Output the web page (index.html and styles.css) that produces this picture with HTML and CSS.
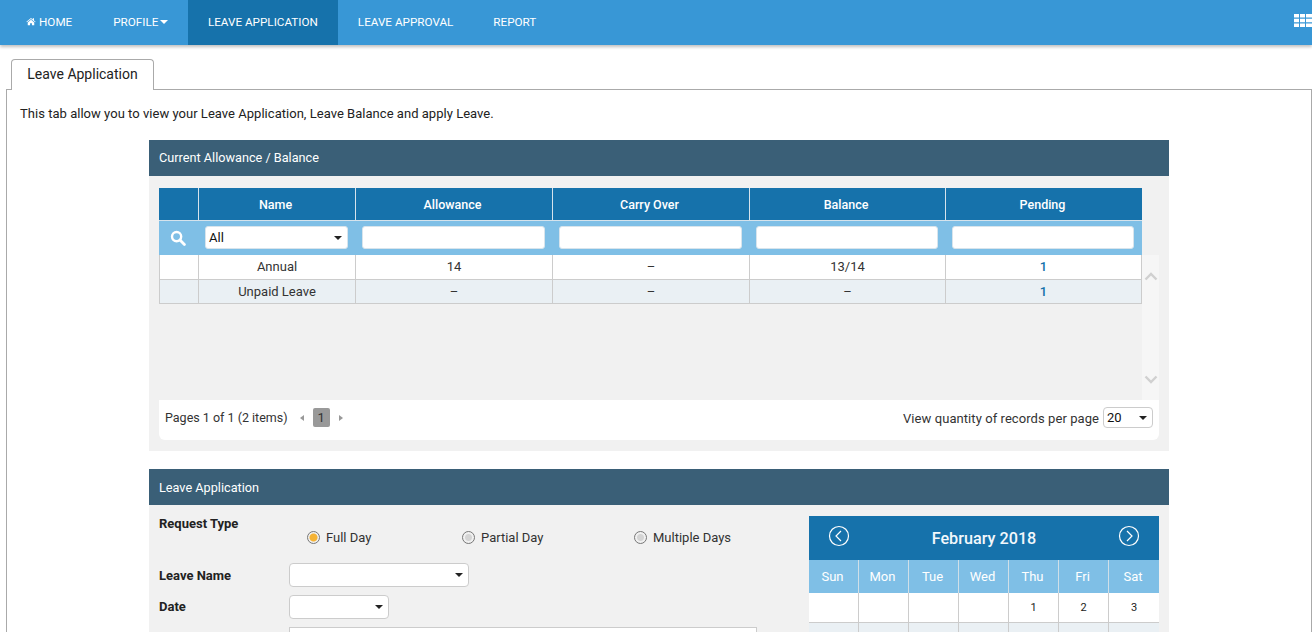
FILE: index.html
```html
<!DOCTYPE html>
<html lang="en">
<head>
<meta charset="utf-8">
<title>Leave Application</title>
<link rel="stylesheet" href="styles.css">
</head>
<body>
<nav class="topnav">
  <a class="nav-item nav-home"><svg class="i-home" viewBox="0 0 16 14"><path d="M8 1.2 0.6 7.4l.8.9L8 2.9l6.6 5.4.8-.9-2.6-2.2V1.6h-2v2L8 1.2zM2.8 8.4V13h3.7V9.6h3V13h3.7V8.4L8 4.2 2.8 8.4z" fill="#fff"/></svg>HOME</a>
  <a class="nav-item">PROFILE<span class="caret"></span></a>
  <a class="nav-item active">LEAVE APPLICATION</a>
  <a class="nav-item">LEAVE APPROVAL</a>
  <a class="nav-item">REPORT</a>
  <svg class="i-grid" viewBox="0 0 18 13"><path fill="#fff" d="M0 0h5v3.6H0zM6 0h5v3.6H6zM12 0h6v3.6h-6zM0 4.7h5v3.6H0zM6 4.7h5v3.6H6zM12 4.7h6v3.6h-6zM0 9.4h5V13H0zM6 9.4h5V13H6zM12 9.4h6V13h-6z"/></svg>
</nav>

<div class="tabs"><span class="tab">Leave Application</span></div>

<main class="tab-panel">
  <p class="intro">This tab allow you to view your Leave Application, Leave Balance and apply Leave.</p>

  <section class="section">
    <h2 class="section-head">Current Allowance / Balance</h2>
    <div class="section-body balance-body">
      <div class="grid-row grid-head">
        <div></div><div>Name</div><div>Allowance</div><div>Carry Over</div><div>Balance</div><div>Pending</div>
      </div>
      <div class="grid-row grid-filter">
        <div><svg class="i-search" viewBox="0 0 16 16"><circle cx="6.6" cy="6.6" r="4.6" fill="none" stroke="#fff" stroke-width="2.4"/><path d="M10 10l4.4 4.4" stroke="#fff" stroke-width="2.8" stroke-linecap="round"/></svg></div>
        <div><span class="select filter-select">All</span></div>
        <div><span class="filter-input"></span></div>
        <div><span class="filter-input"></span></div>
        <div><span class="filter-input"></span></div>
        <div><span class="filter-input"></span></div>
      </div>
      <div class="scroller">
        <div class="rows">
          <div class="grid-row grid-data">
            <div></div><div>Annual</div><div>14</div><div>–</div><div>13/14</div><div class="link">1</div>
          </div>
          <div class="grid-row grid-data alt">
            <div></div><div>Unpaid Leave</div><div>–</div><div>–</div><div>–</div><div class="link">1</div>
          </div>
        </div>
        <div class="scrollbar">
          <svg class="chev" viewBox="0 0 14 9"><path d="M1.5 7.5 7 2l5.5 5.5" fill="none" stroke="#d0d0d0" stroke-width="2.4"/></svg>
          <svg class="chev" viewBox="0 0 14 9"><path d="M1.5 1.5 7 7l5.5-5.5" fill="none" stroke="#d0d0d0" stroke-width="2.4"/></svg>
        </div>
      </div>
      <div class="pager">
        <span class="pager-info">Pages 1 of 1 (2 items)</span>
        <span class="tri-left"></span>
        <span class="page-num">1</span>
        <span class="tri-right"></span>
        <span class="pager-qty">View quantity of records per page</span>
        <span class="select qty-select">20</span>
      </div>
    </div>
  </section>

  <section class="section">
    <h2 class="section-head head-form">Leave Application</h2>
    <div class="section-body form-body">
      <form class="leave-form">
        <div class="type-row">
          <label class="form-label">Request Type</label>
          <div class="radios">
            <span class="radio-item r1"><span class="radio on"></span>Full Day</span>
            <span class="radio-item r2"><span class="radio"></span>Partial Day</span>
            <span class="radio-item r3"><span class="radio"></span>Multiple Days</span>
          </div>
        </div>
        <div class="field leave-name"><label class="form-label">Leave Name</label><span class="select sel-name"></span></div>
        <div class="field date"><label class="form-label">Date</label><span class="select sel-date"></span></div>
        <div class="field reason"><label class="form-label">Reason</label><span class="textbox"></span></div>
      </form>
      <aside class="calendar">
        <div class="cal-head">
          <svg class="cal-nav" viewBox="0 0 22 22"><circle cx="11" cy="11" r="9.5" fill="none" stroke="#fff" stroke-width="1.2"/><path d="M13 6l-5 5 5 5" fill="none" stroke="#fff" stroke-width="1.2"/></svg>
          <span class="cal-title">February 2018</span>
          <svg class="cal-nav" viewBox="0 0 22 22"><circle cx="11" cy="11" r="9.5" fill="none" stroke="#fff" stroke-width="1.2"/><path d="M9 6l5 5-5 5" fill="none" stroke="#fff" stroke-width="1.2"/></svg>
        </div>
        <div class="cal-grid cal-days">
          <div>Sun</div><div>Mon</div><div>Tue</div><div>Wed</div><div>Thu</div><div>Fri</div><div>Sat</div>
        </div>
        <div class="cal-grid cal-week">
          <div></div><div></div><div></div><div></div><div>1</div><div>2</div><div>3</div>
        </div>
        <div class="cal-grid cal-week alt">
          <div></div><div></div><div></div><div></div><div></div><div></div><div></div>
        </div>
      </aside>
    </div>
  </section>
</main>
</body>
</html>
```

FILE: styles.css
```css
* { box-sizing: border-box; }
html, body { height: 632px; overflow: hidden; }
body { margin: 0; background: #fff; color: #333; font-family: Roboto, "Liberation Sans", sans-serif; font-size: 13px; }

.topnav { display: flex; height: 45px; background: #3897d6; box-shadow: 0 2px 3px rgba(0,0,0,.25); position: relative; }
.nav-item { display: flex; align-items: center; padding: 0 20px 2px; color: #fff; font-size: 11.7px; white-space: nowrap; }
.nav-home { padding-left: 26px; padding-right: 21px; }
.nav-item.active { background: #1672ab; }
.i-home { width: 10px; height: 9px; margin-right: 3px; }
.caret { width: 0; height: 0; margin-left: 1.5px; border: 4px solid transparent; border-top-color: #fff; border-bottom: 0; }
.i-grid { width: 18px; height: 13px; margin: 14px 0 0 auto; flex: none; }

.tabs { padding: 14px 0 0 11px; height: 44px; position: relative; }
.tab { display: block; width: 143px; height: 31px; padding-top: 6px; text-align: center; font-size: 14px; color: #222; background: #fff; border: 1px solid #aaa; border-bottom: 0; border-radius: 4px 4px 0 0; position: relative; z-index: 1; }

.tab-panel { margin-left: 6px; border: 1px solid #aaa; height: 600px; padding: 0 0 0 142px; }
.intro { margin: 15px 0 17px -129px; line-height: 18px; color: #222; letter-spacing: .03px; }

.section { width: 1020px; margin-bottom: 18px; }
.section-head { margin: 0; height: 36px; line-height: 36px; padding-left: 10px; background: #3a5f77; color: #fff; font-size: 12.7px; font-weight: 400; }
.head-form { line-height: 37px; }
.section-body { background: #f1f1f1; }
.balance-body { height: 275px; padding: 12px 10px 0; }

.grid-row { display: grid; grid-template-columns: 39px 157px 197px 197px 196px 197px; width: 983px; }
.grid-row > div { display: flex; align-items: center; justify-content: center; }
.grid-head { height: 33px; background: #1672ab; color: #fff; font-size: 12.5px; font-weight: 500; border-bottom: 1px solid #d6e3ec; }
.grid-head > div { padding-right: 3px; }
.grid-head > div + div { border-left: 1px solid #d6e3ec; }
.grid-filter { height: 34px; padding-bottom: 1px; background: #7fbfe6; }
.grid-filter > div { padding: 0 7px; }
.grid-filter > div:last-child { padding-right: 8px; }
.i-search { width: 16px; height: 16px; flex: none; margin-left: -1px; }
.filter-input { display: block; width: 100%; height: 23px; background: #fff; border: 1px solid #d8e4ec; border-radius: 3px; }
.select { display: flex; align-items: center; position: relative; background: #fff; border-radius: 4px; border: 1px solid #ccc; padding-left: 3px; color: #111; }
.select::after { content: ""; position: absolute; right: 5px; top: 50%; margin-top: -2px; border: 4px solid transparent; border-top-color: #222; border-bottom: 0; }
.filter-select { width: 100%; height: 23px; border-color: #d8e4ec; border-radius: 3px; }

.scroller { display: flex; height: 145px; width: 1000px; }
.rows { width: 983px; }
.grid-data { height: 25px; background: #fff; border-bottom: 1px solid #ccc; color: #333; }
.grid-data > div { border-left: 1px solid #ccc; padding-bottom: 1px; }
.grid-data > div:last-child { border-right: 1px solid #ccc; }
.grid-data.alt { height: 24px; background: #eaf0f4; }
.link { color: #1672ab; font-weight: 500; }
.scrollbar { width: 17px; background: #f6f6f6; display: flex; flex-direction: column; justify-content: space-between; align-items: center; padding: 17px 0 16px; }
.chev { width: 14px; height: 9px; }

.pager { display: flex; align-items: center; height: 40px; width: 1000px; padding: 0 6px 5px; background: #fff; border-radius: 0 0 6px 6px; }
.pager-info { margin-right: 12px; font-size: 12.5px; }
.tri-left { border: 3.5px solid transparent; border-right: 4px solid #999; border-left: 0; margin-right: 9px; }
.page-num { width: 17px; height: 19px; background: #999; border-radius: 2px; text-align: center; line-height: 19px; margin-right: 9px; }
.tri-right { border: 3.5px solid transparent; border-left: 4px solid #999; border-right: 0; }
.pager-qty { margin-left: auto; margin-right: 4px; padding-top: 1px; letter-spacing: .07px; }
.qty-select { width: 50px; height: 21px; }

.form-body { display: flex; height: 300px; padding: 11px 10px 0; }
.leave-form { width: 650px; }
.form-label { font-weight: 700; color: #222; width: 130px; flex: none; }
.type-row { display: flex; height: 47px; }
.radios { flex: 1; position: relative; padding-top: 13px; display: flex; color: #333; }
.radio-item { display: flex; align-items: center; height: 16px; gap: 6px; }
.r1 { margin-left: 18px; width: 155px; }
.r2 { width: 172px; }
.radio { width: 13px; height: 13px; border-radius: 50%; border: 1px solid #777; background: radial-gradient(circle, #d4d4d4 0 3px, #f0f0f0 4px); flex: none; }
.radio.on { background: radial-gradient(circle, #f5b335 0 3.5px, #f0f0f0 4.5px); }
.field { display: flex; }
.field .form-label { padding-top: 5px; }
.leave-name { height: 32px; }
.date { height: 32px; }
.date .form-label { padding-top: 4px; }
.sel-name { width: 180px; height: 24px; }
.sel-date { width: 100px; height: 24px; }
.textbox { display: block; width: 468px; height: 80px; background: #fff; border: 1px solid #ccc; }

.calendar { width: 350px; flex: none; }
.cal-head { display: flex; justify-content: space-between; align-items: center; height: 44px; padding: 0 19px; background: #1672ab; color: #fff; }
.cal-nav { width: 22px; height: 22px; margin-top: -4px; }
.cal-title { font-size: 16.2px; font-weight: 500; color: #f2f8fc; }
.cal-grid { display: grid; grid-template-columns: 49px repeat(5, 50px) 51px; }
.cal-days { height: 33px; background: #7fbfe6; color: #fff; }
.cal-days > div { display: flex; align-items: center; justify-content: center; padding-right: 2px; }
.cal-days > div + div { border-left: 1px solid #d0dfe8; }
.cal-week { height: 30px; background: #fff; border-bottom: 1px solid #ccc; font-size: 11px; color: #222; }
.cal-week > div { display: flex; align-items: center; justify-content: center; }
.cal-week > div + div { border-left: 1px solid #ccc; }
.cal-week.alt { background: #eaf0f4; }
```
